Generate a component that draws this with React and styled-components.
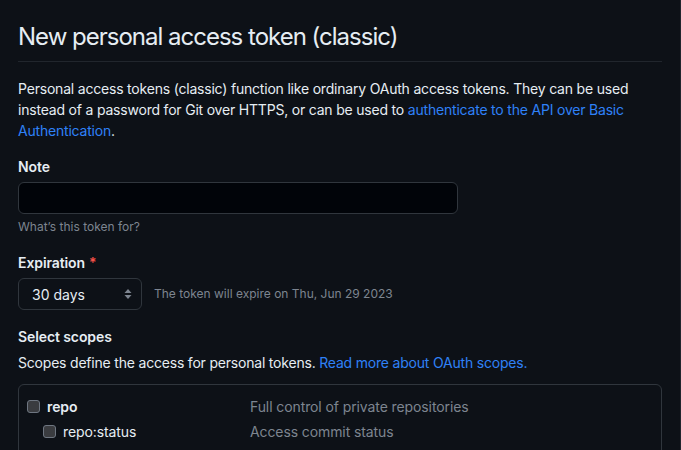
import { styled, createGlobalStyle } from "styled-components";

const GlobalStyle = createGlobalStyle`
    html, body {
        margin: 0;
        padding: 0;
        background: #0d1117;
    }
    body {
        font-family: Inter, "Noto Sans", "Liberation Sans", sans-serif;
        color: #e6edf3;
        font-size: 14px;
    }
`;

const Page = styled.div`
    min-height: 100vh;
    box-sizing: border-box;
    padding: 22px 18px 0 18px;
    border-right: 1px solid #21262d;
    overflow: hidden;
`;

const Subhead = styled.div`
    padding-bottom: 9px;
    border-bottom: 1px solid #21262d;
    margin-bottom: 16px;

    h2 {
        margin: 0;
        font-size: 24px;
        font-weight: 400;
        line-height: 30px;
        letter-spacing: -1px;
    }
`;

const Intro = styled.p`
    margin: 0 0 15px 0;
    line-height: 21px;
    letter-spacing: -0.2px;
`;

const Link = styled.a`
    color: #2f81f7;
    text-decoration: none;
`;

const FormGroup = styled.div`
    margin-bottom: ${(p) => p.$mb ?? 16}px;
`;

const Label = styled.div`
    font-weight: 600;
    line-height: 21px;
    margin-bottom: 5px;
    letter-spacing: -0.1px;

    span {
        color: #f85149;
        margin-left: 4px;
    }
`;

const TextInput = styled.input`
    display: block;
    box-sizing: border-box;
    width: 440px;
    height: 32px;
    background: #010409;
    border: 1px solid #30363d;
    border-radius: 6px;
    color: #e6edf3;
    padding: 5px 12px;
    font: inherit;
    outline: none;
`;

const Note = styled.div`
    margin-top: 4px;
    font-size: 12px;
    line-height: 18px;
    color: #7d8590;
`;

const SelectRow = styled.div`
    display: flex;
    align-items: center;
    gap: 12px;

    ${Note} {
        margin-top: 0;
    }
`;

const Select = styled.div`
    box-sizing: border-box;
    width: 124px;
    height: 32px;
    border: 1px solid #30363d;
    border-radius: 6px;
    background: #0d1117;
    display: flex;
    align-items: center;
    justify-content: space-between;
    padding: 0 9px 0 13px;
    font-size: 14px;
`;

const Hint = styled.p`
    margin: 0 0 11px 0;
    line-height: 21px;
    letter-spacing: -0.2px;
`;

const ScopeBox = styled.div`
    border: 1px solid #30363d;
    border-radius: 6px;
    padding: 11px 8px;
    display: flex;
    flex-direction: column;
    gap: 4px;
`;

const ScopeRow = styled.div`
    display: grid;
    grid-template-columns: 223px 1fr;
    line-height: 21px;
    letter-spacing: -0.1px;
`;

const ScopeName = styled.label`
    display: flex;
    align-items: center;
    gap: 7px;
    padding-left: ${(p) => (p.$sub ? 16 : 0)}px;
    font-weight: ${(p) => (p.$sub ? 400 : 600)};
`;

const Checkbox = styled.span`
    width: 13px;
    height: 13px;
    box-sizing: border-box;
    border: 1px solid #6e7681;
    background: #3a3c40;
    border-radius: 3px;
    flex-shrink: 0;
`;

const ScopeDesc = styled.span`
    color: #7d8590;
`;

const SelectArrow = () => (
    <svg width="8" height="12" viewBox="0 0 8 12">
        <path d="M4 1 L7.5 5 H0.5 Z" fill="#7d8590" />
        <path d="M4 11 L7.5 7 H0.5 Z" fill="#7d8590" />
    </svg>
);

const scopes = [
    { name: "repo", desc: "Full control of private repositories" },
    { name: "repo:status", desc: "Access commit status", sub: true },
    { name: "repo_deployment", desc: "Access deployment status", sub: true },
    { name: "public_repo", desc: "Access public repositories", sub: true },
];

const App = () => {
    return (
        <>
            <GlobalStyle />
            <Page>
                <Subhead>
                    <h2>New personal access token (classic)</h2>
                </Subhead>
                <Intro>
                    Personal access tokens (classic) function like ordinary OAuth access tokens. They can be used
                    instead of a password for Git over HTTPS, or can be used to{" "}
                    <Link href="#">authenticate to the API over Basic Authentication</Link>.
                </Intro>

                <FormGroup>
                    <Label>Note</Label>
                    <TextInput type="text" />
                    <Note>What’s this token for?</Note>
                </FormGroup>

                <FormGroup>
                    <Label>
                        Expiration<span>*</span>
                    </Label>
                    <SelectRow>
                        <Select>
                            30 days
                            <SelectArrow />
                        </Select>
                        <Note>The token will expire on Thu, Jun 29 2023</Note>
                    </SelectRow>
                </FormGroup>

                <FormGroup $mb={0}>
                    <Label>Select scopes</Label>
                    <Hint>
                        Scopes define the access for personal tokens.{" "}
                        <Link href="#">Read more about OAuth scopes.</Link>
                    </Hint>
                    <ScopeBox>
                        {scopes.map((s) => (
                            <ScopeRow key={s.name}>
                                <ScopeName $sub={s.sub}>
                                    <Checkbox />
                                    {s.name}
                                </ScopeName>
                                <ScopeDesc>{s.desc}</ScopeDesc>
                            </ScopeRow>
                        ))}
                    </ScopeBox>
                </FormGroup>
            </Page>
        </>
    );
};

export default App;
